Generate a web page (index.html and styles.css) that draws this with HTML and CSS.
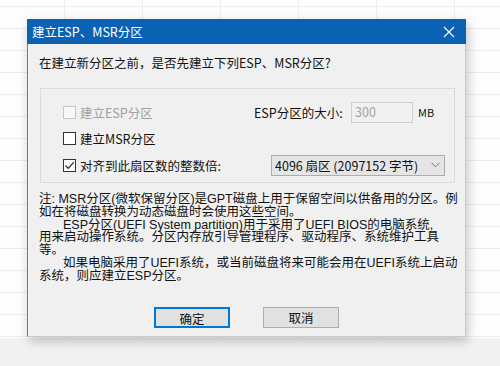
FILE: index.html
```html
<!DOCTYPE html>
<html lang="zh-CN">
<head>
<meta charset="utf-8">
<title>建立ESP、MSR分区</title>
<link rel="stylesheet" href="styles.css">
</head>
<body>

<div class="dialog">
	<div class="titlebar">
		<span class="title">建立ESP、MSR分区</span>
		<svg class="close" width="12" height="12" viewBox="0 0 12 12">
			<path d="M1 1 L11 11 M11 1 L1 11" stroke="#fff" stroke-width="1.1" fill="none"/>
		</svg>
	</div>

	<div class="content">
		<p class="question">在建立新分区之前，是否先建立下列ESP、MSR分区?</p>

		<div class="group">
			<label class="check disabled"><span class="box"></span>建立ESP分区</label>
			<div class="size">
				<span class="size-label">ESP分区的大小:</span>
				<span class="input">300</span>
				<span class="unit">MB</span>
			</div>

			<label class="check"><span class="box"></span>建立MSR分区</label>
			<div></div>

			<label class="check">
				<span class="box">
					<svg width="11" height="11" viewBox="0 0 11 11"><path d="M1.5 5.5 L4.3 8.3 L9.8 2.2" stroke="#222" stroke-width="1.2" fill="none"/></svg>
				</span>对齐到此扇区数的整数倍:
			</label>
			<div class="select">
				<span>4096 扇区 (2097152 字节)</span>
				<svg width="9" height="6" viewBox="0 0 9 6"><path d="M0.5 0.8 L4.5 4.8 L8.5 0.8" stroke="#777" stroke-width="1" fill="none"/></svg>
			</div>
		</div>

		<div class="note">
			<div class="line">注: MSR分区(微软保留分区)是GPT磁盘上用于保留空间以供备用的分区。例</div>
			<div class="line">如在将磁盘转换为动态磁盘时会使用这些空间。</div>
			<div class="line indent">ESP分区(UEFI System partition)用于采用了UEFI BIOS的电脑系统,</div>
			<div class="line">用来启动操作系统。分区内存放引导管理程序、驱动程序、系统维护工具</div>
			<div class="line">等。</div>
			<div class="line indent">如果电脑采用了UEFI系统，或当前磁盘将来可能会用在UEFI系统上启动</div>
			<div class="line">系统，则应建立ESP分区。</div>
		</div>

		<div class="buttons">
			<button class="btn default">确定</button>
			<button class="btn">取消</button>
		</div>
	</div>
</div>

</body>
</html>
```

FILE: styles.css
```css
body {
    margin: 0;
    width: 500px;
    height: 366px;
    overflow: hidden;
    font-family: "Noto Sans CJK SC", "Noto Sans", sans-serif;
    font-size: 12.5px;
    color: #111;
    background-color: #fdfdfd;
    background-image:
        linear-gradient(to bottom, transparent 338px, #f1f1f1 338px),
        repeating-linear-gradient(to bottom, transparent 0, transparent 6px, #ececec 6px, #ececec 7px, transparent 7px, transparent 22px),
        repeating-linear-gradient(to right, transparent 0, transparent 64px, #ededed 64px, #ededed 65px, transparent 65px, transparent 78px);
    padding-top: 19px;
    box-sizing: border-box;
}

.dialog {
    margin-left: 27px;
    width: 439px;
    height: 318px;
    box-sizing: border-box;
    background: #f0f0f0;
    border: 1px solid #c9c9c9;
    border-left-color: #4f86c0;
    border-top: none;
    box-shadow: 2px 4px 10px rgba(0,0,0,0.22);
}

.titlebar {
    height: 25px;
    margin: 0 -1px 0 -1px;
    background: #0b62b5;
    display: flex;
    align-items: center;
    justify-content: space-between;
    padding: 0 11px 0 5px;
}

.title {
    color: #fff;
    font-size: 12.5px;
}

.close {
    display: block;
}

.content {
    padding: 0 11px 0 11px;
}

.question {
    margin: 11px 0 0 0;
    line-height: 16px;
    white-space: nowrap;
}

.group {
    margin: 17px -1px 0 1px;
    height: 95px;
    box-sizing: border-box;
    border: 1px solid #dcdcdc;
    padding: 10px 10px 0 22px;
    display: grid;
    grid-template-columns: 191px 1fr;
    grid-template-rows: 26px 27px 26px;
    align-items: center;
}

.check {
    display: flex;
    align-items: center;
    gap: 4px;
    white-space: nowrap;
}

.box {
    width: 11px;
    height: 11px;
    border: 1px solid #333;
    background: #fff;
    display: flex;
    align-items: center;
    justify-content: center;
}

.box svg {
    display: block;
}

.check.disabled {
    color: #a0a0a0;
}

.check.disabled .box {
    border-color: #c8c8c8;
    background: #f7f7f7;
}

.size {
    display: flex;
    align-items: center;
    white-space: nowrap;
}

.size-label {
    width: 97px;
}

.input {
    width: 62px;
    height: 21px;
    box-sizing: border-box;
    border: 1px solid #cfcfcf;
    color: #a5a5a5;
    padding: 0 3px;
    line-height: 18px;
}

.unit {
    margin-left: 5px;
    font-size: 11px;
}

.select {
    margin-left: 17px;
    width: 174px;
    height: 21px;
    box-sizing: border-box;
    border: 1px solid #adadad;
    background: #e5e5e5;
    display: flex;
    align-items: center;
    justify-content: space-between;
    padding: 0 4px 0 3px;
    white-space: nowrap;
}

.select svg {
    display: block;
}

/* latin part in an Arial-width face, CJK falls back */
.note {
    margin: 10px 0 0 0;
    font-family: "Liberation Sans", "Noto Sans CJK SC", sans-serif;
    font-size: 12.5px;
    color: #111;
}

.line {
    height: 12.8px;
    line-height: 12.8px;
    white-space: nowrap;
}

.indent {
    padding-left: 24px;
}

.buttons {
    margin-top: 24px;
    display: flex;
    justify-content: center;
    gap: 33px;
}

.btn {
    width: 76px;
    height: 21px;
    box-sizing: border-box;
    border: 1px solid #adadad;
    background: #e1e1e1;
    font-family: "Noto Sans CJK SC", sans-serif;
    font-size: 12.5px;
    padding: 0;
    color: #111;
}

.btn.default {
    border: 2px solid #0078d7;
}
```
